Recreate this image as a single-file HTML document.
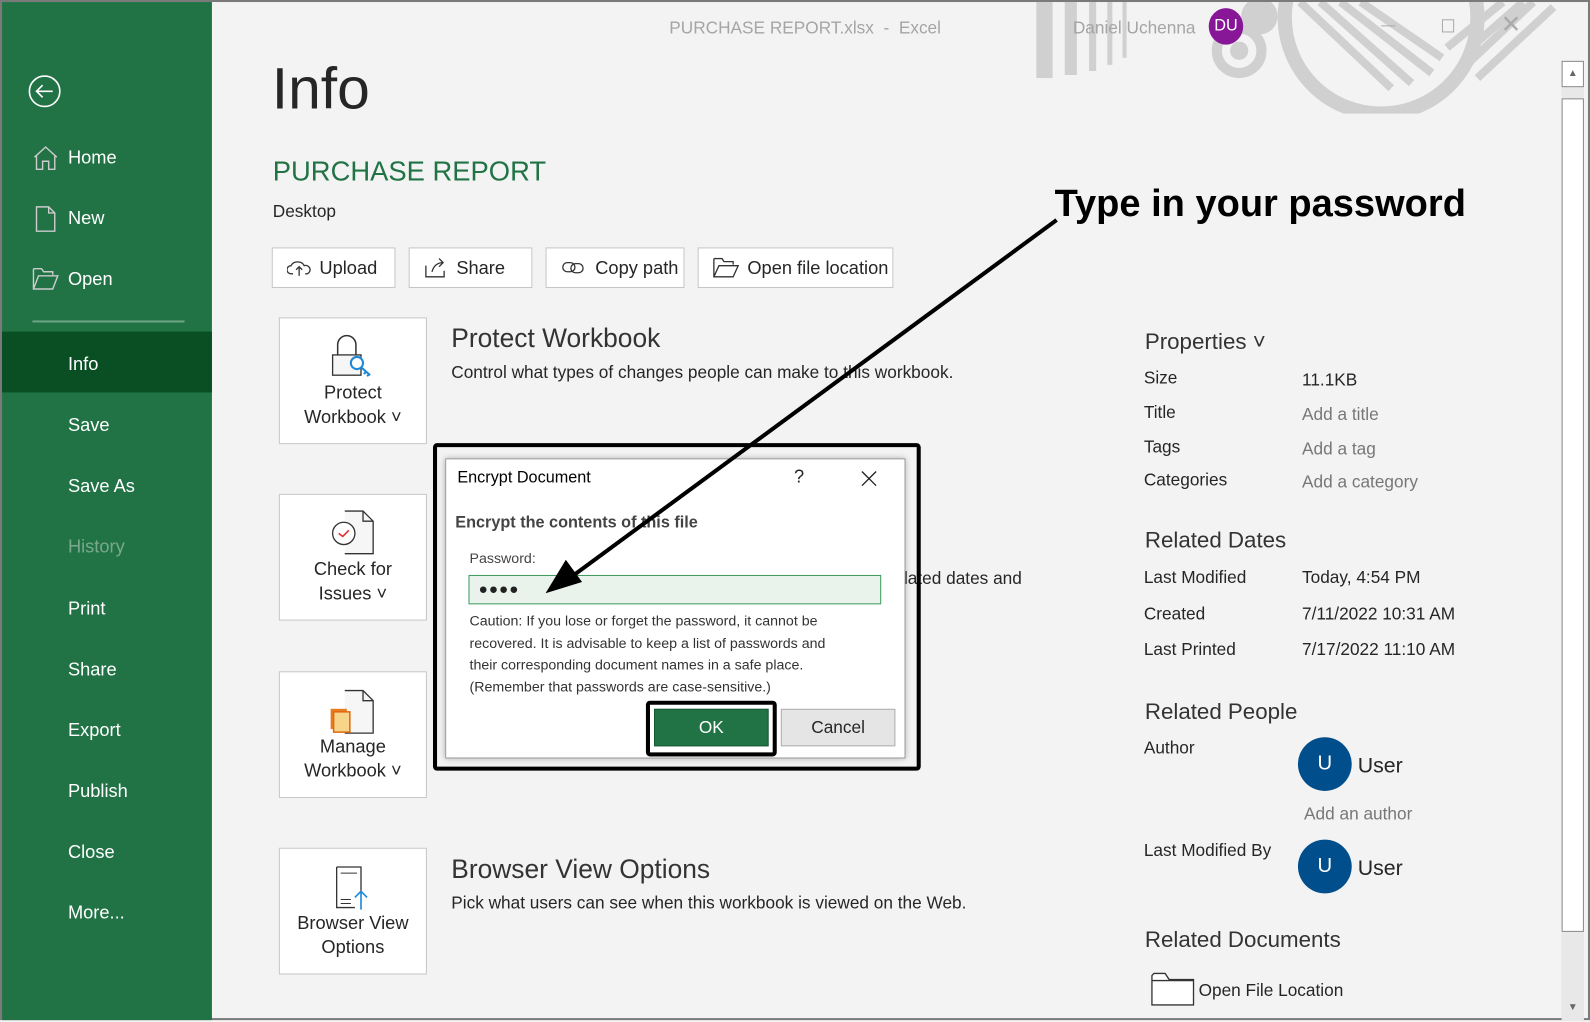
<!DOCTYPE html>
<html><head><meta charset="utf-8"><style>
*{margin:0;padding:0;box-sizing:border-box}
html,body{width:1590px;height:1020px;overflow:hidden;background:#f3f3f3}
#w{position:absolute;left:0;top:0;width:1568px;height:1006px;transform:scale(1.01403);transform-origin:0 0;font-family:"Liberation Sans",sans-serif;color:#262626;background:#f3f3f3;border:2px solid #7a7a7a}
.a{position:absolute;white-space:nowrap}
#side{position:absolute;left:0;top:0;width:207px;height:1004px;background:#217346}
.nav{position:absolute;left:65px;color:#fff;font-size:18px}
.btn{position:absolute;top:242px;height:40px;border:1px solid #c6c6c6;background:#fff;font-size:18px;display:flex;align-items:center;padding-left:14px;gap:8px}
.big{position:absolute;left:273px;width:146px;height:125px;border:1px solid #c6c6c6;background:#fff;text-align:center;font-size:18px;color:#262626}
.big .t{position:absolute;left:0;right:0;bottom:14px;line-height:24px}
.pl{position:absolute;left:1126px;font-size:17px;color:#262626}
.pv{position:absolute;left:1282px;font-size:17px;color:#262626}
.ph{color:#777}
.hd{position:absolute;left:1127px;font-size:22px;color:#333}
</style></head><body><div id="w">
<svg class="a" style="left:900px;top:0" width="640" height="110">
<g fill="#d0d0d0">
<rect x="120" y="0" width="16" height="75"/><rect x="148" y="0" width="12" height="72"/><rect x="172" y="0" width="7" height="68"/><rect x="190" y="0" width="5" height="62"/><rect x="205" y="0" width="4" height="55"/>
<circle cx="340" cy="14" r="18"/>
</g>
<circle cx="320" cy="48" r="22" fill="none" stroke="#d0d0d0" stroke-width="10"/><circle cx="320" cy="48" r="9" fill="#d0d0d0"/>
<circle cx="460" cy="15" r="95" fill="none" stroke="#d0d0d0" stroke-width="14"/>
<g stroke="#d0d0d0" stroke-width="8"><line x1="380" y1="0" x2="470" y2="85"/><line x1="400" y1="0" x2="490" y2="80"/><line x1="420" y1="0" x2="510" y2="70"/><line x1="440" y1="0" x2="520" y2="55"/>
<line x1="525" y1="45" x2="580" y2="0"/><line x1="545" y1="48" x2="600" y2="0"/><line x1="525" y1="80" x2="610" y2="0"/><line x1="555" y1="75" x2="630" y2="5"/></g>
</svg>
<div class="a" style="left:658px;top:16px;font-size:17px;color:#a5a5a5">PURCHASE REPORT.xlsx &nbsp;-&nbsp; Excel</div>
<div class="a" style="left:1056px;top:16px;font-size:17px;color:#a5a5a5">Daniel Uchenna</div>
<div class="a" style="left:1190px;top:6px;width:34px;height:36px;border-radius:50%;background:#881798;color:#fff;font-size:16px;text-align:center;line-height:36px">DU</div>
<div class="a" style="left:1360px;top:23px;width:14px;height:1px;background:#aaa"></div>
<div class="a" style="left:1420px;top:17px;width:12px;height:13px;border:1px solid #aaa"></div>
<div class="a" style="left:1478px;top:8px;font-size:24px;color:#aaa">✕</div>
<div class="a" style="left:1538px;top:58px;width:22px;height:946px;background:#e8e8e8"></div>
<div class="a" style="left:1538px;top:58px;width:22px;height:26px;background:#fff;border:1px solid #888;text-align:center;font-size:10px;line-height:24px;color:#666">▲</div>
<div class="a" style="left:1538px;top:95px;width:22px;height:822px;background:#fff;border:1px solid #888"></div>
<div class="a" style="left:1538px;top:980px;width:22px;height:24px;text-align:center;font-size:10px;line-height:24px;color:#666">▼</div>

<div id="side">
<svg class="a" style="left:25px;top:71px" width="34" height="34"><circle cx="17" cy="17" r="15" fill="none" stroke="#fff" stroke-width="1.6"/><path d="M9 17h16M15 11l-6 6 6 6" fill="none" stroke="#fff" stroke-width="1.6"/></svg>
<svg class="a" style="left:30px;top:141px" width="26" height="26"><path d="M2 12 L13 2 L24 12 M4 11 V24 H10 V16 H16 V24 H22 V11" fill="none" stroke="#ccc" stroke-width="1.4"/></svg>
<div class="nav" style="top:143px">Home</div>
<svg class="a" style="left:33px;top:201px" width="22" height="26"><path d="M1 1H13L19 7V25H1Z M13 1V7H19" fill="none" stroke="#ccc" stroke-width="1.4"/></svg>
<div class="nav" style="top:203px">New</div>
<svg class="a" style="left:30px;top:262px" width="26" height="22"><path d="M1 1H9L11 4H20V7 M1 1V21H20L25 8H6L1 21" fill="none" stroke="#ccc" stroke-width="1.4"/></svg>
<div class="nav" style="top:263px">Open</div>
<div class="a" style="left:30px;top:314px;width:150px;height:2px;background:#6fa585"></div>
<div class="a" style="left:0;top:325px;width:207px;height:60px;background:#0a4e23"></div>
<div class="nav" style="top:347px">Info</div>
<div class="nav" style="top:407px">Save</div>
<div class="nav" style="top:467px">Save As</div>
<div class="nav" style="top:527px;color:#7aa88c">History</div>
<div class="nav" style="top:588px">Print</div>
<div class="nav" style="top:648px">Share</div>
<div class="nav" style="top:708px">Export</div>
<div class="nav" style="top:768px">Publish</div>
<div class="nav" style="top:828px">Close</div>
<div class="nav" style="top:888px">More...</div>
</div>

<div class="a" style="left:266px;top:52px;font-size:58px;font-weight:300;color:#262626">Info</div>
<div class="a" style="left:267px;top:152px;font-size:27px;color:#217346">PURCHASE REPORT</div>
<div class="a" style="left:267px;top:197px;font-size:17px">Desktop</div>
<div class="btn" style="left:266px;width:122px"><svg width="24" height="20"><path d="M6 16H4a4 4 0 010-8 7 6 0 0113 0 4 4 0 013 8h-2M12 18V9M9 12l3-3 3 3" fill="none" stroke="#333" stroke-width="1.3"/></svg>Upload</div>
<div class="btn" style="left:401px;width:122px"><svg width="24" height="22"><path d="M2 9V20H20V14 M8 15C10 8 14 6 19 6M15 2l4 4-4 4" fill="none" stroke="#333" stroke-width="1.3"/></svg>Share</div>
<div class="btn" style="left:536px;width:137px"><svg width="26" height="18"><rect x="2" y="4" width="12" height="9" rx="4.5" fill="none" stroke="#333" stroke-width="1.3"/><rect x="10" y="5" width="12" height="9" rx="4.5" fill="none" stroke="#333" stroke-width="1.3"/></svg>Copy path</div>
<div class="btn" style="left:686px;width:193px"><svg width="26" height="20"><path d="M1 1H9L11 4H20V7 M1 1V19H20L25 8H6L1 19" fill="none" stroke="#333" stroke-width="1.3"/></svg>Open file location</div>

<div class="big" style="top:311px"><svg style="margin-top:16px" width="42" height="44"><path d="M6 20V10a9 9 0 0118 0v10" fill="none" stroke="#333" stroke-width="1.5"/><rect x="1" y="20" width="28" height="20" fill="#f6f6f6" stroke="#333" stroke-width="1.3"/><circle cx="25" cy="28" r="6" fill="#fff" stroke="#1e88d8" stroke-width="2"/><path d="M29 32l9 8M34 36l-2 3M37 39l-2 2" stroke="#1e88d8" stroke-width="2"/></svg><div class="t">Protect<br>Workbook ˅</div></div>
<div class="big" style="top:485px"><svg style="margin-top:14px" width="44" height="46"><path d="M14 2H32L42 12V44H14" fill="#f6f6f6" stroke="#333" stroke-width="1.3"/><path d="M32 2V12H42" fill="none" stroke="#333" stroke-width="1.3"/><circle cx="13" cy="24" r="11" fill="#fff" stroke="#333" stroke-width="1.3"/><path d="M8 24l4 3 6-6" fill="none" stroke="#e03030" stroke-width="1.6"/></svg><div class="t">Check for<br>Issues ˅</div></div>
<div class="big" style="top:660px"><svg style="margin-top:16px" width="44" height="46"><path d="M14 2H32L42 12V44H14" fill="#f6f6f6" stroke="#333" stroke-width="1.3"/><path d="M32 2V12H42" fill="none" stroke="#333" stroke-width="1.3"/><rect x="0" y="20" width="16" height="20" fill="#e87a20"/><rect x="3" y="23" width="16" height="20" fill="#f6d48a" stroke="#e06a10" stroke-width="1.5"/></svg><div class="t">Manage<br>Workbook ˅</div></div>
<div class="big" style="top:834px"><svg style="margin-top:16px" width="44" height="46"><path d="M6 2H30V26" fill="none" stroke="#333" stroke-width="1.3"/><path d="M6 2V42H24" fill="none" stroke="#333" stroke-width="1.3"/><path d="M10 8H26M10 34H20M10 38H20" stroke="#333"/><path d="M30 44V26M24 32l6-6 6 6" fill="none" stroke="#1e88d8" stroke-width="1.6"/></svg><div class="t">Browser View<br>Options</div></div>

<div class="a" style="left:443px;top:316px;font-size:26px;color:#333">Protect Workbook</div>
<div class="a" style="left:443px;top:356px;font-size:17px">Control what types of changes people can make to this workbook.</div>
<div class="a" style="left:880px;top:559px;font-size:17px">elated dates and</div>
<div class="a" style="left:443px;top:840px;font-size:26px;color:#333">Browser View Options</div>
<div class="a" style="left:443px;top:879px;font-size:17px">Pick what users can see when this workbook is viewed on the Web.</div>

<div class="hd" style="top:322px">Properties ˅</div>
<div class="pl" style="top:361px">Size</div><div class="pv" style="top:363px">11.1KB</div>
<div class="pl" style="top:395px">Title</div><div class="pv ph" style="top:397px">Add a title</div>
<div class="pl" style="top:429px">Tags</div><div class="pv ph" style="top:431px">Add a tag</div>
<div class="pl" style="top:462px">Categories</div><div class="pv ph" style="top:464px">Add a category</div>
<div class="hd" style="top:518px">Related Dates</div>
<div class="pl" style="top:558px">Last Modified</div><div class="pv" style="top:558px">Today, 4:54 PM</div>
<div class="pl" style="top:594px">Created</div><div class="pv" style="top:594px">7/11/2022 10:31 AM</div>
<div class="pl" style="top:629px">Last Printed</div><div class="pv" style="top:629px">7/17/2022 11:10 AM</div>
<div class="hd" style="top:687px">Related People</div>
<div class="pl" style="top:726px">Author</div>
<div class="a" style="left:1278px;top:725px;width:53px;height:53px;border-radius:50%;background:#004e8c;color:#fff;text-align:center;line-height:53px;font-size:20px">U</div>
<div class="a" style="left:1337px;top:742px;font-size:21px">User</div>
<div class="pv ph" style="top:791px;left:1284px">Add an author</div>
<div class="pl" style="top:827px">Last Modified By</div>
<div class="a" style="left:1278px;top:826px;width:53px;height:53px;border-radius:50%;background:#004e8c;color:#fff;text-align:center;line-height:53px;font-size:20px">U</div>
<div class="a" style="left:1337px;top:843px;font-size:21px">User</div>
<div class="hd" style="top:912px">Related Documents</div>
<svg class="a" style="left:1133px;top:956px" width="44" height="34"><path d="M1 4V33H42V8H18L14 2H3Z M1 9H42" fill="#fff" stroke="#333" stroke-width="1.3"/></svg>
<div class="a" style="left:1180px;top:965px;font-size:17px">Open File Location</div>

<div class="a" style="left:425px;top:435px;width:481px;height:323px;border:4px solid #000;border-radius:4px"></div>
<div class="a" style="left:437px;top:450px;width:454px;height:296px;background:#fff;border:1px solid #999;box-shadow:0 0 6px rgba(0,0,0,.3)"></div>
<div class="a" style="left:449px;top:461px;font-size:16px;color:#000">Encrypt Document</div>
<div class="a" style="left:781px;top:458px;font-size:18px">?</div>
<svg class="a" style="left:846px;top:461px" width="18" height="18"><path d="M2 2L16 16M16 2L2 16" stroke="#222" stroke-width="1.3"/></svg>
<div class="a" style="left:447px;top:505px;font-size:16px;font-weight:bold;color:#444">Encrypt the contents of this file</div>
<div class="a" style="left:461px;top:540px;font-size:14px;color:#444">Password:</div>
<div class="a" style="left:460px;top:565px;width:407px;height:29px;background:#e9f3ec;border:1px solid #3e9a5e;font-size:15px;padding-left:9px;line-height:27px;color:#222;letter-spacing:1px">●●●●</div>
<div class="a" style="left:461px;top:600px;font-size:14px;line-height:21.5px;color:#333">Caution: If you lose or forget the password, it cannot be<br>recovered. It is advisable to keep a list of passwords and<br>their corresponding document names in a safe place.<br>(Remember that passwords are case-sensitive.)</div>
<div class="a" style="left:635px;top:689px;width:129px;height:55px;border:4px solid #000;border-radius:4px"></div>
<div class="a" style="left:643px;top:697px;width:113px;height:37px;background:#217346;border:1px solid #145a30;color:#fff;text-align:center;line-height:35px;font-size:17px">OK</div>
<div class="a" style="left:768px;top:697px;width:113px;height:37px;background:#e5e5e5;border:1px solid #adadad;text-align:center;line-height:35px;font-size:17px">Cancel</div>

<svg class="a" style="left:0;top:0" width="1568" height="1006"><line x1="1040" y1="215" x2="560" y2="568" stroke="#000" stroke-width="4"/><path d="M536 583L556 550L572 572Z" fill="#000"/></svg>
<div class="a" style="left:1038px;top:177px;font-size:37.5px;font-weight:bold;color:#000">Type in your password</div>
</div></body></html>
